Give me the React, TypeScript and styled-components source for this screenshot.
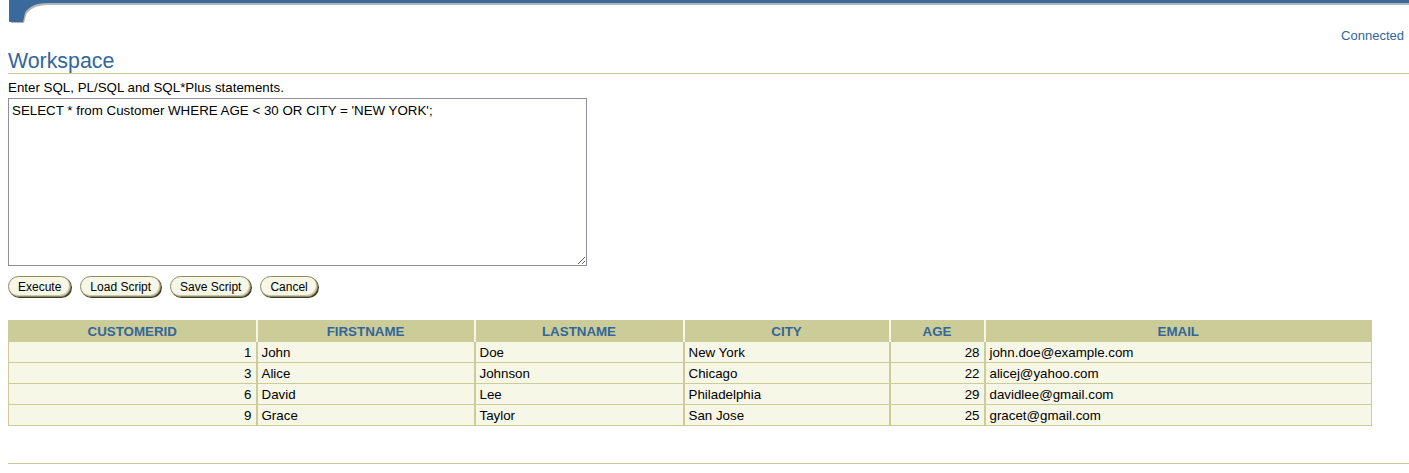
import React from 'react';
import styled, { createGlobalStyle } from 'styled-components';

const GlobalStyle = createGlobalStyle`
  html, body {
    margin: 0;
    padding: 0;
    background: #ffffff;
    font-family: "Liberation Sans", Arial, sans-serif;
    font-size: 13.33px;
    color: #000000;
  }
`;

const Page = styled.div`
  padding-left: 8px;
  width: 1401px;
`;

const Header = styled.div`
  display: flex;
  align-items: flex-start;
  height: 24px;
`;

const HeaderCap = styled.svg`
  display: block;
  flex: none;
`;

const HeaderBar = styled.div`
  flex: 1;
  height: 3px;
  background: #3a6a9c;
  border-bottom: 2px solid #b4b4b4;
`;

const StatusRow = styled.div`
  display: flex;
  justify-content: flex-end;
  padding-right: 5px;
  height: 22px;
  line-height: 24px;
`;

const StatusLink = styled.span`
  color: #336699;
  font-size: 13px;
`;

const Title = styled.h1`
  margin: 0;
  padding-top: 3px;
  font-weight: normal;
  font-size: 21.33px;
  color: #336699;
  line-height: 24px;
  border-bottom: 1px solid #c9c99a;
`;

const Prompt = styled.div`
  margin-top: 6px;
  line-height: 16px;
`;

const Editor = styled.textarea`
  display: block;
  box-sizing: border-box;
  width: 579px;
  height: 168px;
  margin-top: 2px;
  border: 1px solid #8f8f9d;
  padding: 3px 3px;
  font-family: "Liberation Sans", Arial, sans-serif;
  font-size: 13.33px;
  line-height: 17px;
  color: #000;
  resize: both;
  outline: none;
`;

const ButtonRow = styled.div`
  display: flex;
  gap: 9px;
  margin-top: 10px;
`;

const Button = styled.button`
  height: 21px;
  padding: 0 9px;
  border-radius: 11px;
  border: 1px solid #8a8a66;
  box-shadow: 1px 1px 0 #3c3c20, inset -1px -1px 0 #c6c6a8;
  background: #f7f7e7;
  font-family: "Liberation Sans", Arial, sans-serif;
  font-size: 12px;
  color: #000;
  cursor: pointer;
`;

const Table = styled.table`
  margin-top: 23px;
  border-collapse: collapse;
  width: 1363px;
  table-layout: fixed;
  background: #f7f7e7;
`;

const Th = styled.th`
  background: #cccc99;
  color: #336699;
  font-weight: bold;
  font-size: 13.33px;
  height: 20px;
  padding: 0 4px;
  border: 1px solid #cccc99;
  border-left: 2px solid #f7f7e7;
  &:first-child {
    border-left: 1px solid #cccc99;
  }
`;

const Td = styled.td<{ num?: boolean }>`
  text-align: ${p => (p.num ? 'right' : 'left')};
  height: 20px;
  padding: 0 4px;
  border: 1px solid #cccc99;
  border-left-width: 2px;
  white-space: nowrap;
  &:first-child {
    border-left-width: 1px;
  }
`;

const FooterRule = styled.div`
  margin-top: 37px;
  border-top: 1px solid #c9c99a;
`;

const columns = [
  { key: 'CUSTOMERID', w: 248, num: true },
  { key: 'FIRSTNAME', w: 218 },
  { key: 'LASTNAME', w: 209 },
  { key: 'CITY', w: 206 },
  { key: 'AGE', w: 95, num: true },
  { key: 'EMAIL', w: 387 },
];

const rows = [
  ['1', 'John', 'Doe', 'New York', '28', 'john.doe@example.com'],
  ['3', 'Alice', 'Johnson', 'Chicago', '22', 'alicej@yahoo.com'],
  ['6', 'David', 'Lee', 'Philadelphia', '29', 'davidlee@gmail.com'],
  ['9', 'Grace', 'Taylor', 'San Jose', '25', 'gracet@gmail.com'],
];

export default function App() {
  return (
    <>
      <GlobalStyle />
      <Page>
        <Header>
          <HeaderCap width="50" height="24" viewBox="0 0 50 24">
            <path d="M2 0 H50 V5 H40 C29 5 21 9 18 15 L16 23 H4 Q3 23 3 22 Z" fill="#b4b4b4" />
            <path d="M1 0 H50 V3 H39 C28 3 20 7 17 13 L15 22 H2 Q1 22 1 21 Z" fill="#3a6a9c" />
          </HeaderCap>
          <HeaderBar />
        </Header>
        <StatusRow>
          <StatusLink>Connected</StatusLink>
        </StatusRow>
        <Title>Workspace</Title>
        <Prompt>Enter SQL, PL/SQL and SQL*Plus statements.</Prompt>
        <Editor defaultValue="SELECT * from Customer WHERE AGE < 30 OR CITY = 'NEW YORK';" spellCheck={false} />
        <ButtonRow>
          <Button>Execute</Button>
          <Button>Load Script</Button>
          <Button>Save Script</Button>
          <Button>Cancel</Button>
        </ButtonRow>
        <Table>
          <colgroup>
            {columns.map(c => (
              <col key={c.key} style={{ width: c.w }} />
            ))}
          </colgroup>
          <thead>
            <tr>
              {columns.map(c => (
                <Th key={c.key}>{c.key}</Th>
              ))}
            </tr>
          </thead>
          <tbody>
            {rows.map((r, i) => (
              <tr key={'row-' + i}>
                {r.map((cell, j) => (
                  <Td key={j} num={columns[j].num}>{cell}</Td>
                ))}
              </tr>
            ))}
          </tbody>
        </Table>
        <FooterRule />
      </Page>
    </>
  );
}
